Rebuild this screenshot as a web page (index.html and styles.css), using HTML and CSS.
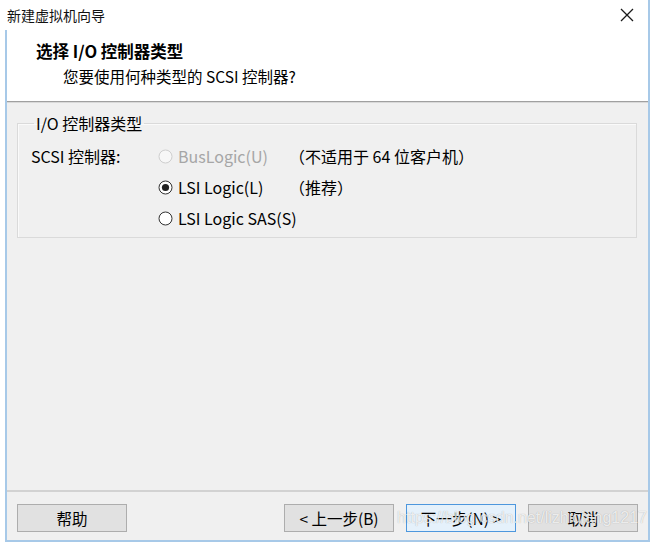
FILE: index.html
```html
<!DOCTYPE html>
<html lang="zh-CN">
<head>
<meta charset="utf-8">
<title>新建虚拟机向导</title>
<link rel="stylesheet" href="styles.css">
</head>
<body>
<div class="window">
  <div class="titlebar">
    <span class="title">新建虚拟机向导</span>
    <svg class="close" width="14" height="14" viewBox="0 0 14 14"><path d="M1 1 L13 13 M13 1 L1 13" stroke="#1a1a1a" stroke-width="1.3" fill="none"/></svg>
  </div>
  <div class="header">
    <div class="heading">选择 I/O 控制器类型</div>
    <div class="subtitle">您要使用何种类型的 SCSI 控制器?</div>
  </div>
  <div class="content">
    <fieldset class="group">
      <legend>I/O 控制器类型</legend>
      <div class="grid">
        <div class="label">SCSI 控制器:</div>
        <div class="radio disabled">
          <svg width="15" height="15" viewBox="0 0 15 15"><circle cx="7.5" cy="7.5" r="6.5" fill="#f7f7f7" stroke="#cfcfcf" stroke-width="1"/></svg>
          <span>BusLogic(U)</span>
        </div>
        <div class="note">（不适用于 64 位客户机）</div>
        <div class="label"></div>
        <div class="radio">
          <svg width="15" height="15" viewBox="0 0 15 15"><circle cx="7.5" cy="7.5" r="6.5" fill="#fff" stroke="#333" stroke-width="1"/><circle cx="7.5" cy="7.5" r="3.6" fill="#222"/></svg>
          <span>LSI Logic(L)</span>
        </div>
        <div class="note">（推荐）</div>
        <div class="label"></div>
        <div class="radio">
          <svg width="15" height="15" viewBox="0 0 15 15"><circle cx="7.5" cy="7.5" r="6.5" fill="#fff" stroke="#333" stroke-width="1"/></svg>
          <span>LSI Logic SAS(S)</span>
        </div>
        <div class="note"></div>
      </div>
    </fieldset>
  </div>
  <div class="footer">
    <button class="btn">帮助</button>
    <div class="spacer"></div>
    <button class="btn">&lt; 上一步(B)</button>
    <button class="btn default">下一步(N) &gt;</button>
    <button class="btn">取消</button>
  </div>
</div>
<div class="watermark">https://blog.csdn.net/lizhiqiang1217</div>
</body>
</html>
```

FILE: styles.css
```css
html, body {
  margin: 0;
  padding: 0;
}
body {
  width: 652px;
  height: 542px;
  background: #ffffff;
  font-family: "Noto Sans CJK SC", "Noto Sans", sans-serif;
  font-size: 16px;
  color: #000;
  overflow: hidden;
  position: relative;
}
.window {
  margin: 0 2px 0 5px;
  height: 540px;
  border: 2px solid #a7c9e8;
  border-top: none;
  display: flex;
  flex-direction: column;
  background: #f0f0f0;
}
.titlebar {
  height: 30px;
  background: #fff;
  display: flex;
  align-items: center;
  justify-content: space-between;
  padding: 0 14px 0 2px;
  margin-left: -2px;
}
.title {
  font-size: 14px;
  line-height: 18px;
  color: #111;
}
.close {
  display: block;
}
.header {
  height: 71px;
  background: #fff;
  border-bottom: 1px solid #a0a0a0;
  box-shadow: 0 1px 0 #d9d9d9;
  box-sizing: content-box;
}
.heading {
  padding: 11px 0 0 29px;
  font-size: 16.5px;
  font-weight: bold;
  line-height: 21px;
}
.subtitle {
  padding: 5px 0 0 56px;
  font-size: 15.5px;
  line-height: 19px;
}
.content {
  flex: 1;
  padding: 12px 11px 0 10px;
}
.group {
  margin: 0;
  padding: 8px 0 3px 13px;
  border: 1px solid #dadada;
  box-shadow: inset 1px 1px 0 #fafafa;
}
.group legend {
  padding: 0 2px;
  margin-left: 3px;
  font-size: 16px;
  line-height: 19px;
}
.grid {
  display: grid;
  grid-template-columns: 127px 131px 1fr;
  grid-auto-rows: 31px;
  align-items: center;
}
.label, .note, .radio span {
  font-size: 16px;
  line-height: 19px;
  white-space: nowrap;
}
.radio {
  display: flex;
  align-items: center;
  gap: 5px;
  white-space: nowrap;
}
.radio svg {
  display: block;
  flex: none;
}
.radio.disabled span {
  color: #a6a6a6;
}
.footer {
  height: 50px;
  border-top: 2px solid #d2d2d2;
  display: flex;
  align-items: flex-start;
  padding: 12px 10px 0 10px;
  gap: 12px;
  box-sizing: border-box;
}
.spacer {
  flex: 1;
}
.btn {
  width: 110px;
  height: 28px;
  background: #e1e1e1;
  border: 1px solid #adadad;
  font-family: "Noto Sans CJK SC", "Noto Sans", sans-serif;
  font-size: 15.5px;
  line-height: 18px;
  color: #000;
  padding: 0;
}
.btn.default {
  background: #e5f1fb;
  border-color: #4d97dd;
}
.watermark {
  position: absolute;
  left: 397px;
  top: 508px;
  font-family: "Liberation Sans", Arial, sans-serif;
  font-size: 16px;
  line-height: 20px;
  color: rgba(255, 255, 255, 0.8);
  text-shadow: 0 0 1px rgba(0, 0, 0, 0.3);
}
```
